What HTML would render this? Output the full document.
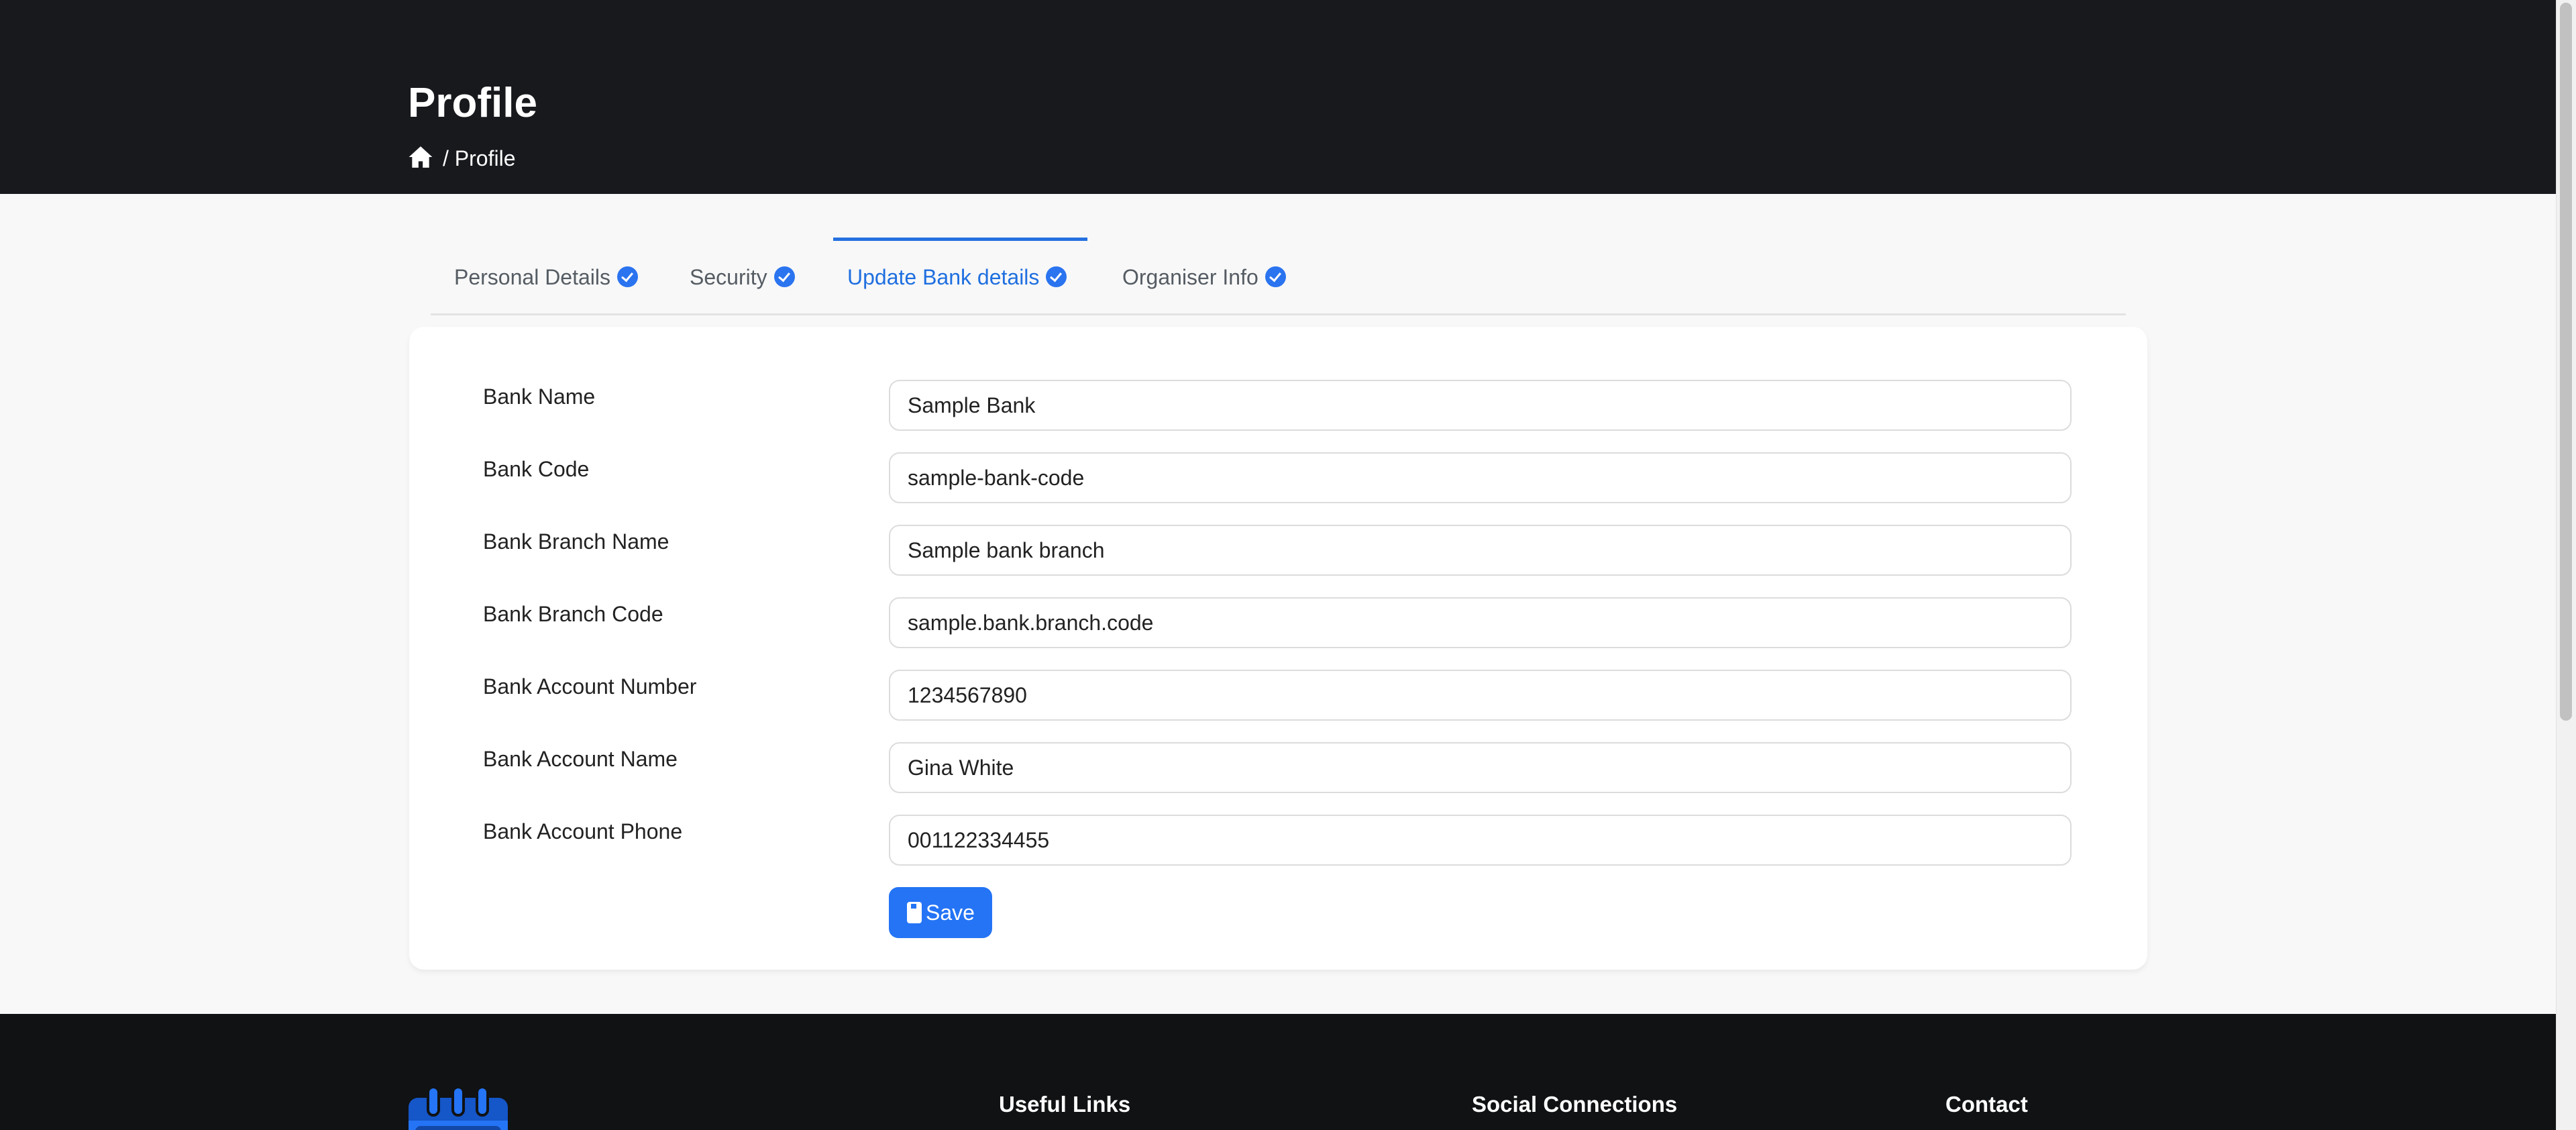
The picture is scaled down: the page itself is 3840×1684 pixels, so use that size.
<!DOCTYPE html>
<html><head><meta charset="utf-8">
<style>
*{box-sizing:border-box;margin:0;padding:0}
html,body{width:3840px;height:1684px;overflow:hidden;background:#f8f8f8;font-family:"Liberation Sans",sans-serif}
.abs{position:absolute}
.hdr{left:0;top:0;width:3810px;height:289px;background:#18191d}
.sb{left:3810px;top:0;width:30px;height:1684px;background:#f1f1f1;border-left:1px solid #e2e2e2}
.thumb{left:3816px;top:4px;width:18px;height:1070px;background:#c1c1c1;border-radius:9px}
.title{left:608px;top:118px;color:#fff;font-size:62px;font-weight:bold}
.crumb{left:660px;top:218px;color:#fff;font-size:32px}
.tab{top:395px;font-size:32px;color:#555c63;white-space:nowrap}
.tab.act{color:#1f6fe0}
.chk{display:inline-block;width:31px;height:31px;border-radius:50%;background:#2b74f0;vertical-align:-4px;margin-left:10px;position:relative}
.chk:after{content:"";position:absolute;left:10px;top:6px;width:7px;height:13px;border:solid #fff;border-width:0 3px 3px 0;transform:rotate(40deg)}
.line{left:642px;top:467px;width:2527px;height:3px;background:#e3e3e3}
.uline{left:1242px;top:354px;width:379px;height:5px;background:#2470e0}
.card{left:610px;top:487px;width:2591px;height:958px;background:#fff;border-radius:22px;box-shadow:0 4px 8px rgba(0,0,0,.06)}
.lbl{left:720px;font-size:32px;color:#222}
.inp{left:1325px;width:1763px;height:76px;border:2px solid #dcdcdc;border-radius:16px;background:#fff;font-size:32px;color:#222;padding:18px 0 0 26px}
.btn{left:1325px;top:1322px;width:154px;height:76px;background:#2474f5;border-radius:14px;color:#fff;font-size:32px;padding:20px 0 0 27px}
.btn i{display:inline-block;width:22px;height:32px;background:#fff;border-radius:4px;vertical-align:-5px;margin-right:6px;position:relative}
.btn i:after{content:"";position:absolute;left:6px;top:3px;width:8px;height:7px;background:#2474f5}
.ftr{left:0;top:1511px;width:3810px;height:173px;background:#101214}
.fh{top:1627px;color:#fff;font-size:33px;font-weight:bold}
</style></head><body>
<div class="abs hdr"></div>
<div class="abs sb"></div><div class="abs thumb"></div>
<div class="abs title">Profile</div>
<svg class="abs" style="left:608px;top:216px" width="38" height="36" viewBox="0 0 24 22"><path d="M12 1L1 11h3v10h6v-6h4v6h6V11h3z" fill="#fff"/></svg>
<div class="abs crumb">/&nbsp;Profile</div>
<div class="abs uline"></div>
<div class="abs tab" style="left:677px">Personal Details<span class="chk"></span></div>
<div class="abs tab" style="left:1028px">Security<span class="chk"></span></div>
<div class="abs tab act" style="left:1263px">Update Bank details<span class="chk"></span></div>
<div class="abs tab" style="left:1673px">Organiser Info<span class="chk"></span></div>
<div class="abs line"></div>
<div class="abs card"></div>
<div class="abs lbl" style="top:573px">Bank Name</div>
<div class="abs inp" style="top:566px">Sample Bank</div>
<div class="abs lbl" style="top:681px">Bank Code</div>
<div class="abs inp" style="top:674px">sample-bank-code</div>
<div class="abs lbl" style="top:789px">Bank Branch Name</div>
<div class="abs inp" style="top:782px">Sample bank branch</div>
<div class="abs lbl" style="top:897px">Bank Branch Code</div>
<div class="abs inp" style="top:890px">sample.bank.branch.code</div>
<div class="abs lbl" style="top:1005px">Bank Account Number</div>
<div class="abs inp" style="top:998px">1234567890</div>
<div class="abs lbl" style="top:1113px">Bank Account Name</div>
<div class="abs inp" style="top:1106px">Gina White</div>
<div class="abs lbl" style="top:1221px">Bank Account Phone</div>
<div class="abs inp" style="top:1214px">001122334455</div>
<div class="abs btn"><i></i>Save</div>
<div class="abs ftr"></div>
<svg class="abs" style="left:607px;top:1618px" width="152" height="66" viewBox="0 0 152 66">
<rect x="2" y="18" width="148" height="60" rx="14" fill="#1556c8"/>
<rect x="2" y="52" width="148" height="30" fill="#2474f5"/>
<rect x="12" y="60" width="128" height="30" rx="8" fill="#1248a8"/>
<g fill="#2474f5" stroke="#101214" stroke-width="4"><rect x="31" y="2" width="16" height="42" rx="8"/><rect x="68" y="2" width="16" height="42" rx="8"/><rect x="104" y="2" width="16" height="42" rx="8"/></g>
</svg>
<div class="abs fh" style="left:1489px">Useful Links</div>
<div class="abs fh" style="left:2194px">Social Connections</div>
<div class="abs fh" style="left:2900px">Contact</div>
</body></html>
